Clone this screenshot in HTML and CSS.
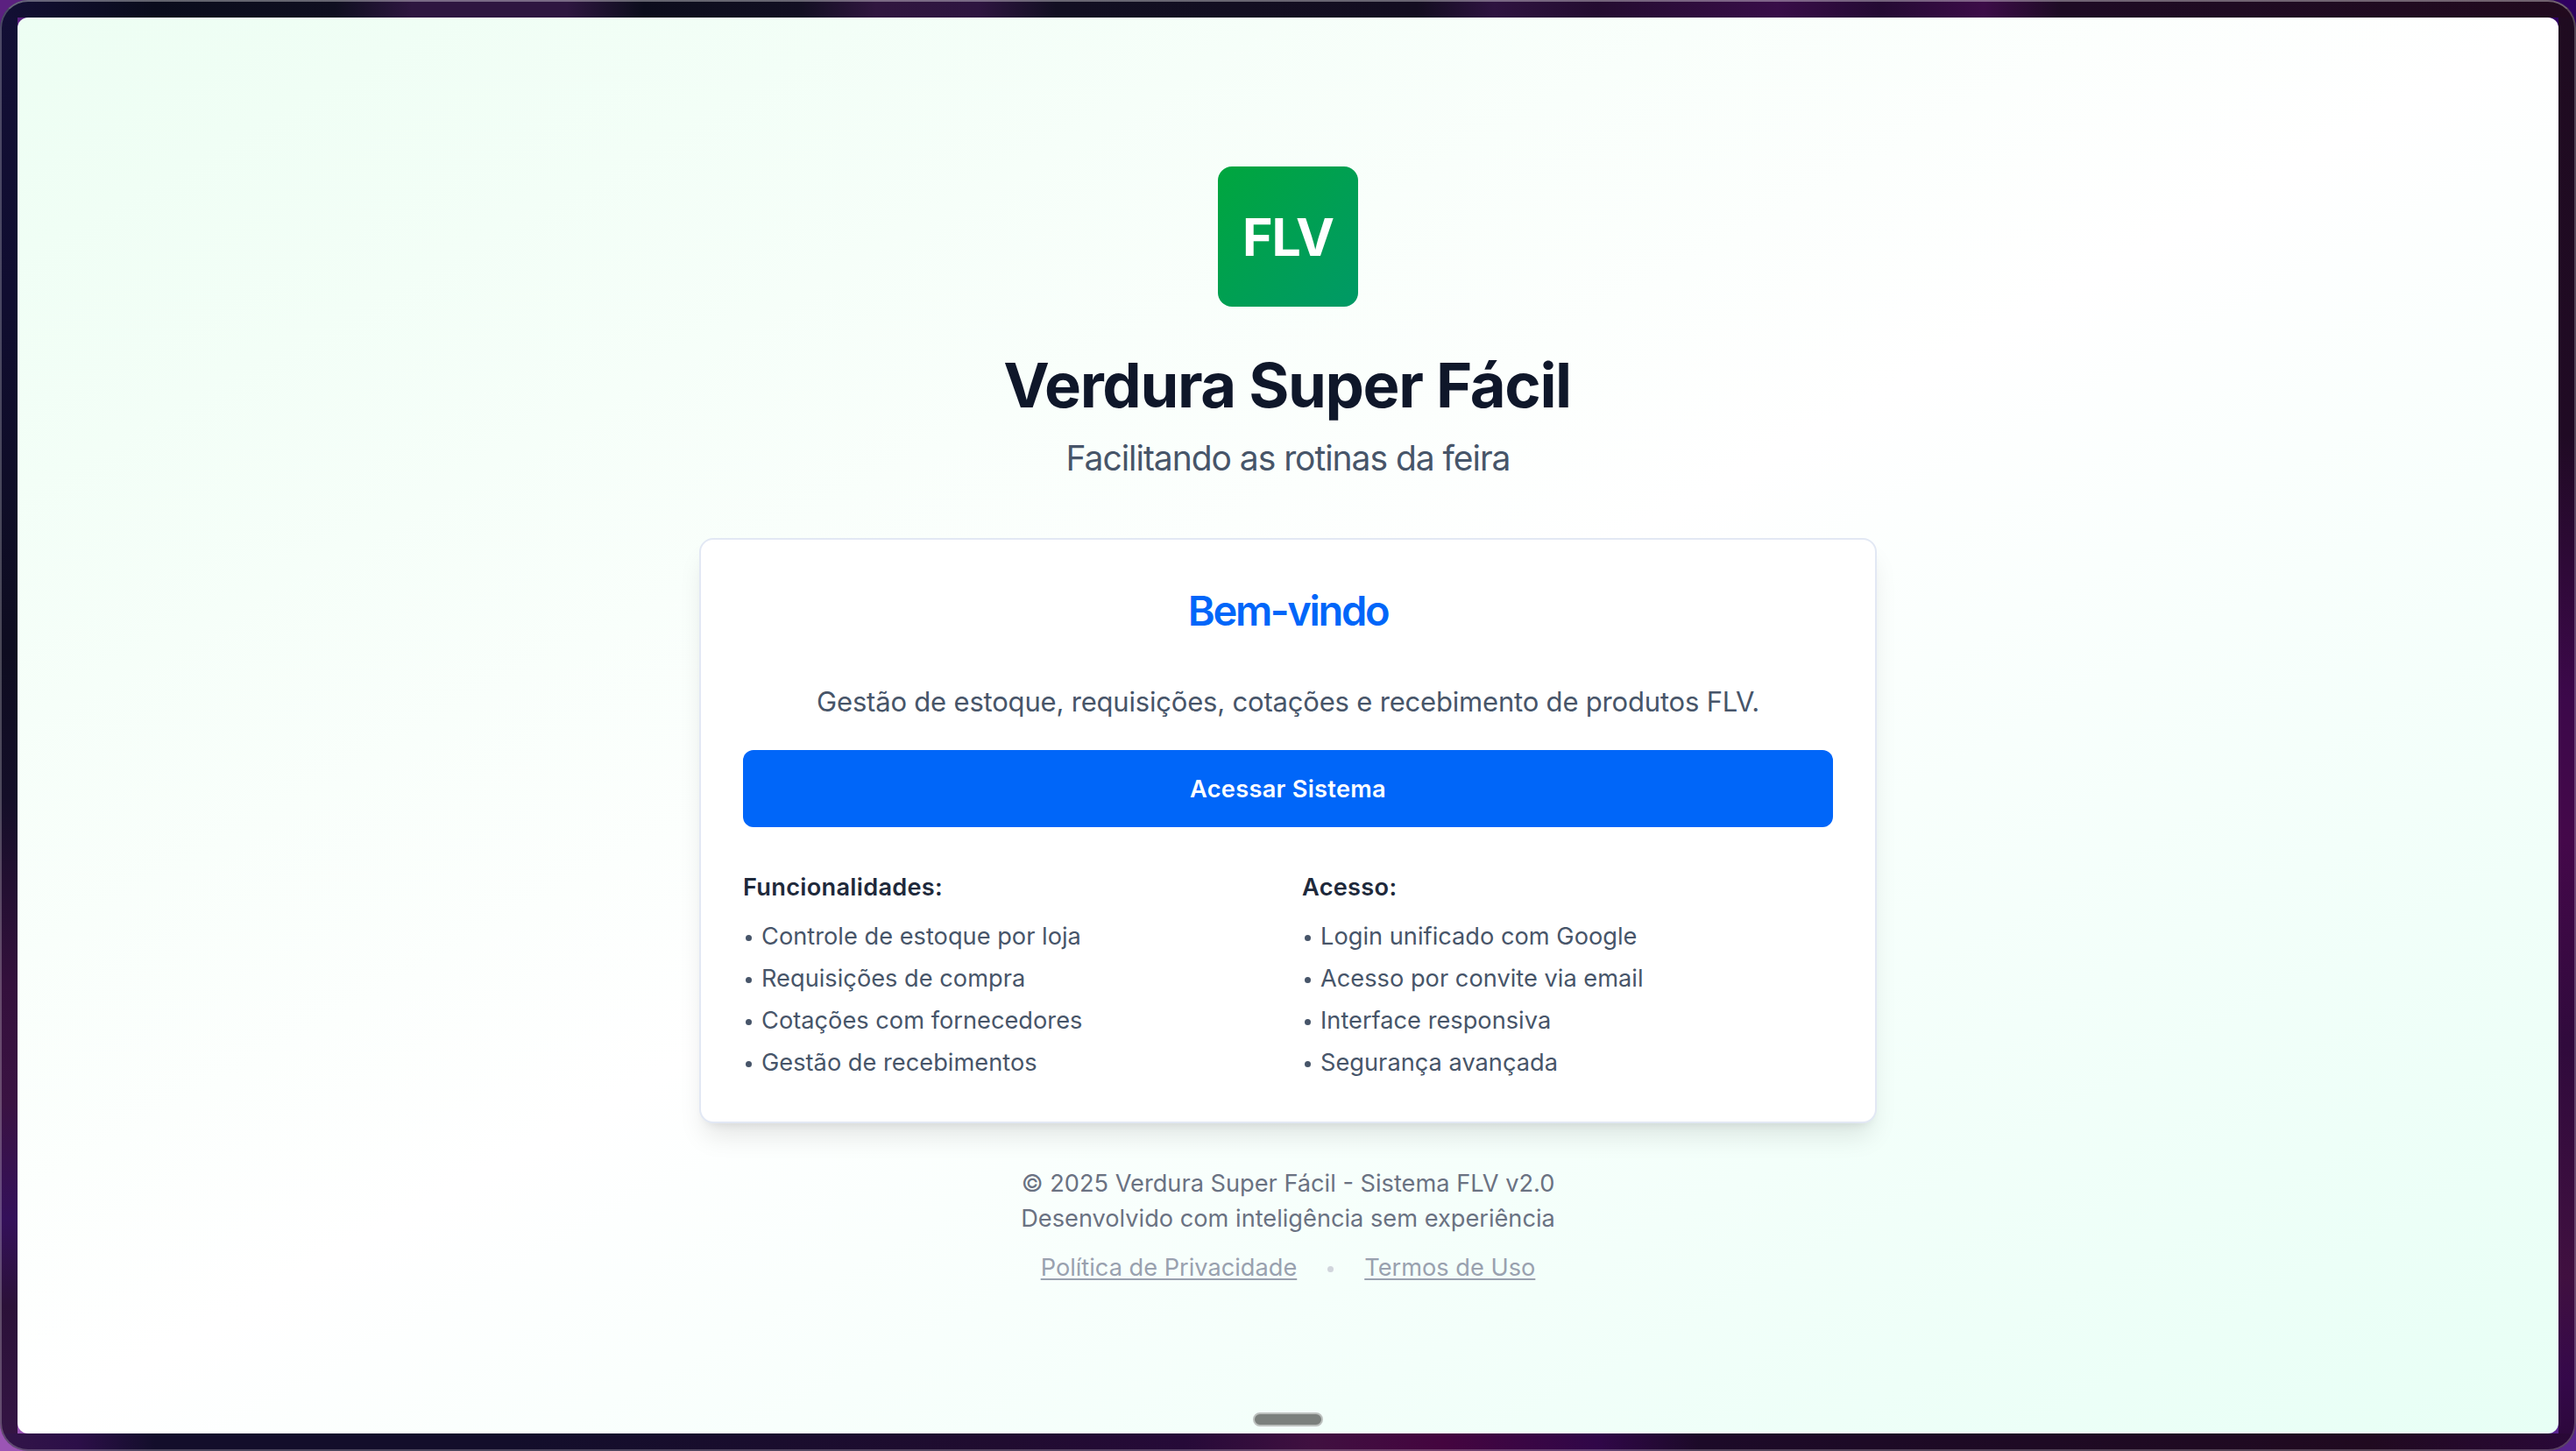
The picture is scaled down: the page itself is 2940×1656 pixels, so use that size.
FILE: index.html
```html
<!DOCTYPE html>
<html lang="pt-BR">
<head>
    <meta charset="UTF-8">
    <meta name="viewport" content="width=device-width, initial-scale=1.0">
    <title>Verdura Super Fácil</title>
    <link rel="stylesheet" href="styles.css">
</head>
<body>
    <div class="frame">
        <main class="page">
            <div class="logo">FLV</div>
            <h1>Verdura Super Fácil</h1>
            <p class="subtitle">Facilitando as rotinas da feira</p>

            <section class="card">
                <h2>Bem-vindo</h2>
                <p class="description">Gestão de estoque, requisições, cotações e recebimento de produtos FLV.</p>
                <button class="access-button">Acessar Sistema</button>

                <div class="columns">
                    <div>
                        <h3>Funcionalidades:</h3>
                        <ul class="list">
                            <li>Controle de estoque por loja</li>
                            <li>Requisições de compra</li>
                            <li>Cotações com fornecedores</li>
                            <li>Gestão de recebimentos</li>
                        </ul>
                    </div>
                    <div>
                        <h3>Acesso:</h3>
                        <ul class="list">
                            <li>Login unificado com Google</li>
                            <li>Acesso por convite via email</li>
                            <li>Interface responsiva</li>
                            <li>Segurança avançada</li>
                        </ul>
                    </div>
                </div>
            </section>

            <footer class="footer">
                <p>© 2025 Verdura Super Fácil - Sistema FLV v2.0</p>
                <p>Desenvolvido com inteligência sem experiência</p>
                <div class="links">
                    <a href="#">Política de Privacidade</a>
                    <span class="dot"></span>
                    <a href="#">Termos de Uso</a>
                </div>
            </footer>

            <div class="handle"></div>
        </main>
    </div>
</body>
</html>
```
FILE: styles.css
```css
* {
    box-sizing: border-box;
    margin: 0;
    padding: 0;
}

body {
    height: 100vh;
    overflow: hidden;
    font-family: Inter, sans-serif;
    font-size: 27.2px;
    line-height: 40px;
    background:
        linear-gradient(#5b2080, #5b2080) top left / 40px 40px no-repeat,
        linear-gradient(#9b55b5, #9b55b5) bottom left / 40px 40px no-repeat,
        linear-gradient(#5a2590, #5a2590) bottom right / 40px 40px no-repeat,
        #2f0060;
}

/* moldura escura em volta da janela */
.frame {
    position: relative;
    height: 100vh;
    padding: 20px;
    border-radius: 32px;
    background:
        linear-gradient(to right, #130f35, #0a0c1c 6%, #0f0f20 13%, #2e1640 16%, #2e1640 22%, #0c0d1c 25%, #120f22 31%, #30163f 34%, #2e1540 38%, #120f22 41%, #130d20 55%, #2e1340 58%, #240c30 62%, #380d48 69%, #240a33 73%, #3c0c48 77%, #1e0b24 80%, #210a1e) top / 100% 20px no-repeat,
        linear-gradient(to right, #321548, #2c0f48 3%, #130e2b 6%, #130e2b 20%, #200c30 39%, #260a38 46%, #401040 51%, #44053f 56%, #300748 62%, #1c0a28 66%, #200a20 92%, #2a0838) bottom / 100% 20px no-repeat,
        linear-gradient(#130f35, #100d30 20%, #0e0c20 45%, #140e28 55%, #34103c 68%, #3a1242 76%, #34105a 84%, #2b1138 90%, #351545) left / 20px 100% no-repeat,
        linear-gradient(#1f0b20, #200a24 30%, #3c084a 48%, #44084a 58%, #300a3c 72%, #401040 88%, #35084a 95%, #2a0838) right / 20px 100% no-repeat;
}

.frame::after {
    content: "";
    position: absolute;
    inset: 0;
    border: 2px solid rgba(255, 255, 255, 0.24);
    border-top-color: rgba(255, 255, 255, 0.36);
    border-radius: 32px;
}

.page {
    position: relative;
    display: flex;
    flex-direction: column;
    align-items: center;
    height: 100%;
    padding-top: 170px;
    border-radius: 12px;
    background: linear-gradient(to bottom right, #edfef3, #ffffff 50%, #e7fff5);
}

.logo {
    width: 160px;
    height: 160px;
    border-radius: 16px;
    background: linear-gradient(to bottom right, #00a63e, #009966);
    color: #fff;
    font-size: 59px;
    font-weight: 700;
    line-height: 161px;
    letter-spacing: -1.2px;
    text-align: center;
}

h1 {
    margin-top: 50px;
    padding-right: 2px;
    color: #0f172a;
    font-size: 70.5px;
    font-weight: 700;
    line-height: 80px;
    letter-spacing: -1.37px;
}

.subtitle {
    margin-top: 15px;
    color: #475569;
    font-size: 39px;
    line-height: 56px;
    letter-spacing: -1.04px;
}

.card {
    display: flex;
    flex-direction: column;
    width: 1344px;
    height: 668px;
    margin-top: 63px;
    padding: 48px;
    border: 2px solid #e2e8f4;
    border-radius: 16px;
    background-color: #fff;
    box-shadow: 0 20px 30px -6px rgba(0, 0, 0, 0.1), 0 8px 12px -8px rgba(0, 0, 0, 0.1);
}

.card h2 {
    margin-top: 1px;
    color: #0066f9;
    font-size: 47px;
    font-weight: 600;
    line-height: 64px;
    letter-spacing: -2.36px;
    text-align: center;
}

.description {
    margin: 44px 0 27px;
    color: #475569;
    font-size: 31px;
    line-height: 56px;
    letter-spacing: -0.19px;
    text-align: center;
}

.access-button {
    height: 88px;
    padding-top: 1px;
    border: none;
    border-radius: 12px;
    background-color: #0066f9;
    color: #fff;
    font: 600 27.2px/87px Inter, sans-serif;
    letter-spacing: 0.28px;
    cursor: pointer;
}

.columns {
    display: grid;
    grid-template-columns: 1fr 1fr;
    gap: 32px;
    margin-top: 49px;
}

h3 {
    color: #1e293b;
    font-size: 27.2px;
    font-weight: 600;
    letter-spacing: 0.28px;
}

.list {
    display: flex;
    flex-direction: column;
    gap: 8px;
    margin-top: 16px;
    color: #475569;
    letter-spacing: 0.02px;
    list-style: none;
}

.list li {
    display: flex;
    align-items: center;
}

.list li::before {
    content: "";
    width: 7px;
    height: 7px;
    margin: 2px 11px 0 3px;
    border-radius: 50%;
    background-color: #475569;
}

.footer {
    margin-top: 49px;
    color: #6a7282;
    text-align: center;
}

.links {
    display: flex;
    justify-content: center;
    align-items: center;
    margin-top: 16px;
}

.links a {
    color: #99a1af;
    text-decoration: underline;
    text-decoration-thickness: 2px;
    text-decoration-skip-ink: none;
    text-underline-offset: 3px;
}

.dot {
    width: 7px;
    height: 7px;
    margin: 2px 35px 0;
    border-radius: 50%;
    background-color: #d1d5dc;
}

.handle {
    position: absolute;
    bottom: 8px;
    left: 1410px;
    width: 80px;
    height: 16px;
    border: 2px solid #bcc0be;
    border-radius: 8px;
    background-color: #7b807d;
}
```
